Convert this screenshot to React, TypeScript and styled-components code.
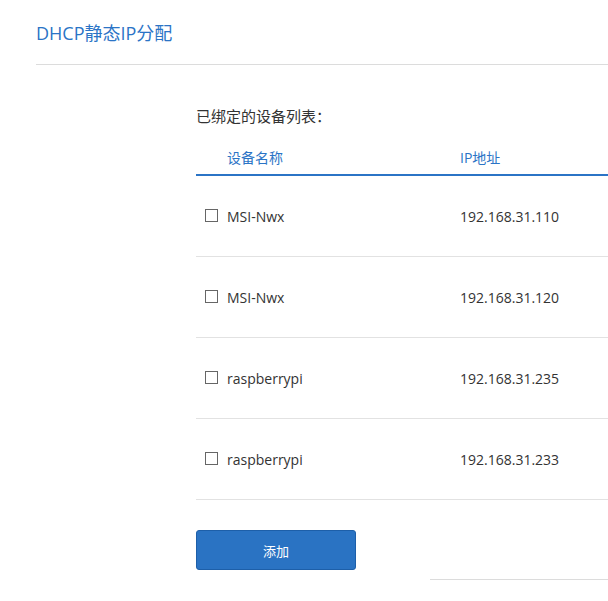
import React from "react";
import styled, { createGlobalStyle } from "styled-components";

const Global = createGlobalStyle`
  html, body { margin: 0; padding: 0; background: #fff; }
  body { font-family: "Open Sans", "Noto Sans CJK SC", sans-serif; color: #333; }
  * { box-sizing: border-box; }
`;

const Page = styled.div`
  width: 608px;
  height: 601px;
  overflow: hidden;
`;

const Header = styled.div`
  margin-left: 36px;
  height: 65px;
  padding-top: 21px;
  border-bottom: 1px solid #dcdcdc;
`;

const Title = styled.h1`
  margin: 0;
  font-family: "Open Sans", "Noto Sans CJK SC", sans-serif;
  font-size: 18px;
  line-height: 24px;
  font-weight: 400;
  color: #2b74c6;
`;

const Content = styled.div`
  margin-left: 196px;
  width: 440px;
  padding-top: 41px;
`;

const SubTitle = styled.div`
  font-size: 15px;
  line-height: 20px;
  color: #333;
  height: 27px;
`;

const HeadRow = styled.div`
  display: grid;
  grid-template-columns: 264px 1fr;
  height: 43px;
  border-bottom: 2px solid #2b74c6;
  align-items: center;
`;

const HeadCell = styled.div<{ $pad?: number }>`
  font-size: 14px;
  color: #2b74c6;
  padding-left: ${(p) => p.$pad ?? 0}px;
  padding-top: 6px;
`;

const Row = styled.div`
  display: grid;
  grid-template-columns: 264px 1fr;
  height: 81px;
  border-bottom: 1px solid #e2e2e2;
  align-items: center;
`;

const NameCell = styled.div`
  display: flex;
  align-items: center;
  padding-left: 9px;
  font-size: 14px;
  color: #333;
`;

const Box = styled.span`
  display: inline-block;
  flex: none;
  width: 13px;
  height: 13px;
  border: 1px solid #666;
  margin-right: 9px;
  margin-top: -1px;
  background: #fff;
`;

const IpCell = styled.div`
  font-size: 14px;
  color: #333;
`;

const Button = styled.button`
  margin-top: 30px;
  width: 160px;
  height: 40px;
  border: 1px solid #1d5fa9;
  border-radius: 3px;
  background: #2a73c3;
  color: #fff;
  font-family: "Noto Sans CJK SC", sans-serif;
  font-size: 13px;
  cursor: pointer;
`;

const Footer = styled.div`
  margin-left: 430px;
  margin-top: 9px;
  border-top: 1px solid #dcdcdc;
`;

const devices = [
  { name: "MSI-Nwx", ip: "192.168.31.110" },
  { name: "MSI-Nwx", ip: "192.168.31.120" },
  { name: "raspberrypi", ip: "192.168.31.235" },
  { name: "raspberrypi", ip: "192.168.31.233" },
];

export default function App() {
  return (
    <Page>
      <Global />
      <Header>
        <Title>DHCP静态IP分配</Title>
      </Header>
      <Content>
        <SubTitle>已绑定的设备列表：</SubTitle>
        <HeadRow>
          <HeadCell $pad={31}>设备名称</HeadCell>
          <HeadCell>IP地址</HeadCell>
        </HeadRow>
        {devices.map((d, i) => (
          <Row key={i}>
            <NameCell>
              <Box />
              {d.name}
            </NameCell>
            <IpCell>{d.ip}</IpCell>
          </Row>
        ))}
        <Button>添加</Button>
      </Content>
      <Footer />
    </Page>
  );
}
